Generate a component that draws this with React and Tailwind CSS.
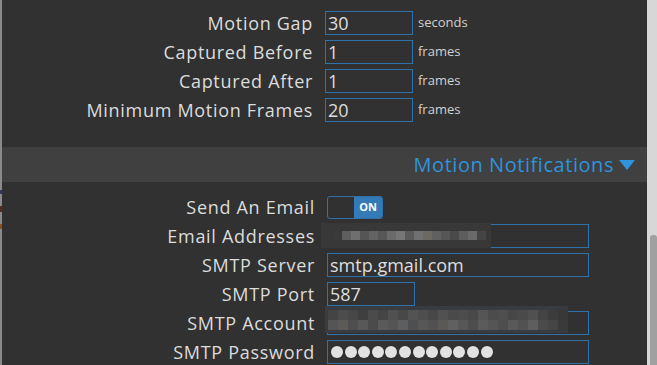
import React from 'react'

const font = { fontFamily: '"Open Sans", "Noto Sans", sans-serif' }

const emailBlocks = [
  'bg-[#3a3a3a]', 'bg-[#5e5e5e]', 'bg-[#6f6f6f]', 'bg-[#555555]', 'bg-[#636363]', 'bg-[#575757]',
  'bg-[#6b6b6b]', 'bg-[#767676]', 'bg-[#5a5a5a]', 'bg-[#707070]', 'bg-[#6c6862]', 'bg-[#606060]',
  'bg-[#565656]', 'bg-[#4a4a4a]', 'bg-[#5d5d5d]', 'bg-[#6a6a6a]', 'bg-[#444444]',
]

const accTop = [
  'bg-[#444]', 'bg-[#4c4c4c]', 'bg-[#474747]', 'bg-[#3f3f3f]', 'bg-[#4b4b4b]', 'bg-[#454545]',
  'bg-[#505050]', 'bg-[#484848]', 'bg-[#535353]', 'bg-[#4e4e4e]', 'bg-[#474747]', 'bg-[#515151]',
  'bg-[#4a4a4a]', 'bg-[#4d4d4d]', 'bg-[#494949]', 'bg-[#555]', 'bg-[#4c4c4c]', 'bg-[#4f4f4f]',
  'bg-[#474747]', 'bg-[#4a4a4a]', 'bg-[#505050]', 'bg-[#444]', 'bg-[#3c3c3c]', 'bg-[#383838]',
]
const accBot = [
  'bg-[#555]', 'bg-[#5c5a56]', 'bg-[#4e4e4e]', 'bg-[#585858]', 'bg-[#4b4b4b]', 'bg-[#5a5a5a]',
  'bg-[#545454]', 'bg-[#5c5e60]', 'bg-[#4f4f4f]', 'bg-[#575757]', 'bg-[#525252]', 'bg-[#5a5955]',
  'bg-[#606060]', 'bg-[#565656]', 'bg-[#4d4d4d]', 'bg-[#5b5b5b]', 'bg-[#555]', 'bg-[#4e4e4e]',
  'bg-[#595959]', 'bg-[#525252]', 'bg-[#5e5e5e]', 'bg-[#4b4b4b]', 'bg-[#454545]', 'bg-[#3a3a3a]',
]

function Input({ value, width = 'w-[88px]', children }) {
  return (
    <div className={`relative h-[24px] ${width} border border-[#2f72aa] flex items-center pl-[2px] text-[18px] text-[#dedede] leading-none`}>
      {value}
      {children}
    </div>
  )
}

function Row({ label, labelW, children, unit }) {
  return (
    <div className="flex items-center h-[24px]">
      <div className={`${labelW} shrink-0 text-right text-[18px] tracking-[0.7px] text-[#dcdcdc] leading-none pr-[12px]`}>{label}</div>
      {children}
      {unit && <span className="ml-[5px] text-[13px] text-[#d0d0d0]">{unit}</span>}
    </div>
  )
}

export default function App() {
  return (
    <div className="w-[657px] h-[365px] flex overflow-hidden bg-[#313131]" style={font}>
      <div className="w-[2px] h-full bg-[#8a8a8a] flex flex-col">
        <div className="h-[190px]" />
        <div className="h-[4px] bg-[#2c3a6a]" />
        <div className="h-[12px]" />
        <div className="h-[6px] bg-[#5a2a20]" />
        <div className="h-[12px]" />
        <div className="h-[5px] bg-[#8a5020]" />
      </div>
      <div className="flex-1 flex flex-col">
        <div className="flex flex-col gap-[5px] pt-[11px]">
          <Row label="Motion Gap" labelW="w-[323px]" unit="seconds"><Input value="30" /></Row>
          <Row label="Captured Before" labelW="w-[323px]" unit="frames"><Input value="1" /></Row>
          <Row label="Captured After" labelW="w-[323px]" unit="frames"><Input value="1" /></Row>
          <Row label="Minimum Motion Frames" labelW="w-[323px]" unit="frames"><Input value="20" /></Row>
        </div>
        <div className="h-[25px]" />
        <div className="h-[35px] bg-[#404040] flex items-center justify-end pr-[11px] text-[20px] tracking-[0.55px] text-[#2f93dd]">
          <span>Motion Notifications</span>
          <svg width="18" height="14" viewBox="0 0 18 14" className="ml-[4px]">
            <polygon points="1,2 17,2 9,12" fill="#2f93dd" />
          </svg>
        </div>
        <div className="flex flex-col gap-[5px] pt-[13px]">
          <Row label="Send An Email" labelW="w-[325px]">
            <div className="h-[23px] w-[56px] border border-[#2f72aa] rounded-[3px] flex overflow-hidden">
              <div className="flex-1" />
              <div className="w-[28px] bg-[#337ab7] flex items-center justify-center text-[11px] font-bold text-white">ON</div>
            </div>
          </Row>
          <Row label="Email Addresses" labelW="w-[325px]">
            <Input value="" width="w-[262px]">
              <div className="absolute left-[-7px] top-[-2px] w-[170px] h-[25px] bg-[#383838] flex flex-col justify-center">
                <div className="flex h-[9px] pl-[12px]">
                  {emailBlocks.map((c, i) => <div key={i} className={`w-[9px] h-full ${c}`} />)}
                </div>
              </div>
            </Input>
          </Row>
          <Row label="SMTP Server" labelW="w-[325px]"><Input value="smtp.gmail.com" width="w-[262px]" /></Row>
          <Row label="SMTP Port" labelW="w-[325px]"><Input value="587" /></Row>
          <Row label="SMTP Account" labelW="w-[325px]">
            <Input value="" width="w-[262px]">
              <div className="absolute left-[-3px] top-[-6px] w-[243px] h-[27px] bg-[#383c40] flex flex-col justify-center">
                <div className="flex h-[10px] pl-[3px]">
                  {accTop.map((c, i) => <div key={i} className={`w-[10px] h-full ${c}`} />)}
                </div>
                <div className="flex h-[10px] pl-[3px]">
                  {accBot.map((c, i) => <div key={i} className={`w-[10px] h-full ${c}`} />)}
                </div>
              </div>
            </Input>
          </Row>
          <Row label="SMTP Password" labelW="w-[325px]">
            <Input value="" width="w-[262px]">
              <div className="flex gap-[1.6px] pl-[1px]">
                {Array.from({ length: 12 }).map((_, i) => (
                  <div key={i} className="w-[12px] h-[12px] rounded-full bg-[#e2e2e2]" />
                ))}
              </div>
            </Input>
          </Row>
        </div>
      </div>
      <div className="w-[10px] h-full bg-[#d7d7d7] flex flex-col items-end">
        <div className="h-[235px]" />
        <div className="w-[7px] flex-1 bg-[#a0a0a0] rounded-t-[3px]" />
      </div>
    </div>
  )
}
